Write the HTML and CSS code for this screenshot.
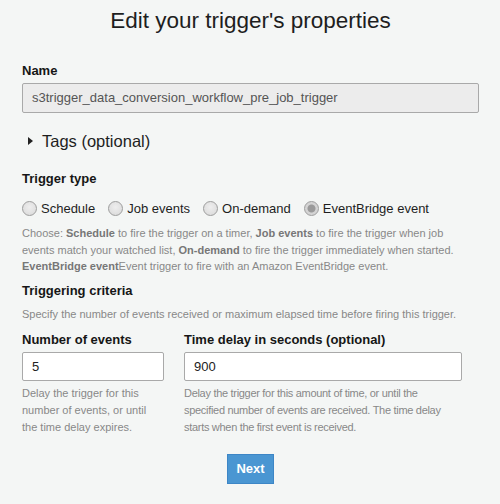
FILE: index.html
```html
<!DOCTYPE html>
<html>
<head>
<meta charset="utf-8">
<link rel="stylesheet" href="styles.css">
</head>
<body>
<div class="page">
  <h1 class="title">Edit your trigger's properties</h1>

  <div class="field">
    <label class="label">Name</label>
    <div class="input input-disabled">s3trigger_data_conversion_workflow_pre_job_trigger</div>
  </div>

  <div class="tags">
    <span class="caret"></span>
    <span class="tags-text">Tags (optional)</span>
  </div>

  <div class="section">
    <div class="label">Trigger type</div>
    <div class="radios">
      <span class="radio-item"><span class="radio"></span>Schedule</span>
      <span class="radio-item"><span class="radio"></span>Job events</span>
      <span class="radio-item"><span class="radio"></span>On-demand</span>
      <span class="radio-item"><span class="radio radio-checked"></span>EventBridge event</span>
    </div>
    <p class="help help-type">Choose: <b>Schedule</b> to fire the trigger on a timer, <b>Job events</b> to fire the trigger when job<br>events match your watched list, <b>On-demand</b> to fire the trigger immediately when started.<br><b>EventBridge event</b>Event trigger to fire with an Amazon EventBridge event.</p>
  </div>

  <div class="section section-criteria">
    <div class="label">Triggering criteria</div>
    <p class="help help-single">Specify the number of events received or maximum elapsed time before firing this trigger.</p>
    <div class="criteria">
      <div class="col col-left">
        <div class="label">Number of events</div>
        <div class="input input-sm">5</div>
        <p class="help help-col">Delay the trigger for this number of events, or until the time delay expires.</p>
      </div>
      <div class="col col-right">
        <div class="label">Time delay in seconds (optional)</div>
        <div class="input input-sm">900</div>
        <p class="help help-col help-tight">Delay the trigger for this amount of time, or until the<br>specified number of events are received. The time delay<br>starts when the first event is received.</p>
      </div>
    </div>
  </div>

  <div class="actions">
    <button class="btn">Next</button>
  </div>
</div>
</body>
</html>
```
FILE: styles.css
```css
html, body {
  margin: 0;
  padding: 0;
  background: #f4f6f5;
}
body {
  font-family: "Liberation Sans", Arial, sans-serif;
  color: #222;
  width: 500px;
  height: 504px;
  overflow: hidden;
}
.page {
  padding: 0 21px 0 22px;
}
.title {
  margin: 0;
  padding-top: 8px;
  height: 55px;
  font-size: 22.5px;
  font-weight: normal;
  text-align: center;
  line-height: 26px;
  color: #1e1e1e;
}
.label {
  display: block;
  font-weight: bold;
  font-size: 13px;
  line-height: 16px;
  color: #161616;
}
.field .label {
  margin-bottom: 4px;
}
.input {
  box-sizing: border-box;
  height: 30px;
  border: 1px solid #a9a9a9;
  border-radius: 2px;
  background: #fff;
  font-size: 13px;
  line-height: 28px;
  padding: 0 9px;
  color: #222;
  white-space: nowrap;
}
.input-sm {
  height: 29px;
  line-height: 27px;
}
.input-disabled {
  background: #ececec;
  color: #555;
}
.tags {
  display: flex;
  align-items: center;
  height: 24px;
  margin-top: 16px;
  padding-left: 6px;
}
.caret {
  width: 0;
  height: 0;
  border-top: 4px solid transparent;
  border-bottom: 4px solid transparent;
  border-left: 5px solid #222;
  margin-right: 9px;
}
.tags-text {
  font-size: 16.5px;
  color: #1e1e1e;
}
.section {
  margin-top: 18px;
}
.section-criteria {
  margin-top: 8px;
}
.radios {
  display: flex;
  align-items: center;
  margin-top: 12px;
  height: 18px;
  font-size: 13px;
  color: #1e1e1e;
  white-space: nowrap;
}
.radio-item {
  display: inline-flex;
  align-items: center;
  margin-right: 13px;
}
.radio {
  box-sizing: border-box;
  width: 15px;
  height: 15px;
  border-radius: 50%;
  border: 1px solid #9d9d9d;
  background: radial-gradient(circle at 50% 40%, #eeeeee 0%, #d8d8d8 100%);
  margin-right: 4px;
}
.radio-checked {
  background: radial-gradient(circle, #9a9a9a 0 3.5px, #d4d4d4 4.5px);
}
.help {
  margin: 0;
  font-size: 11px;
  line-height: 16.5px;
  color: #888;
}
.help b {
  color: #777;
}
.help-type {
  margin-top: 8px;
  white-space: nowrap;
}
.help-single {
  margin-top: 7px;
}
.criteria {
  display: flex;
  margin-top: 10px;
}
.col-left {
  width: 142px;
  margin-right: 20px;
}
.col-right {
  width: 278px;
}
.col .label {
  margin-bottom: 4px;
}
.help-col {
  margin-top: 3.5px;
  line-height: 17px;
}
.help-tight {
  white-space: nowrap;
  letter-spacing: -0.3px;
}
.actions {
  display: flex;
  justify-content: center;
  margin-top: 18px;
}
.btn {
  width: 47px;
  height: 30px;
  border: 1px solid #3d86c6;
  background: #4a96d2;
  color: #fff;
  font-family: "Liberation Sans", Arial, sans-serif;
  font-weight: bold;
  font-size: 13px;
  border-radius: 0;
  padding: 0;
}
```
